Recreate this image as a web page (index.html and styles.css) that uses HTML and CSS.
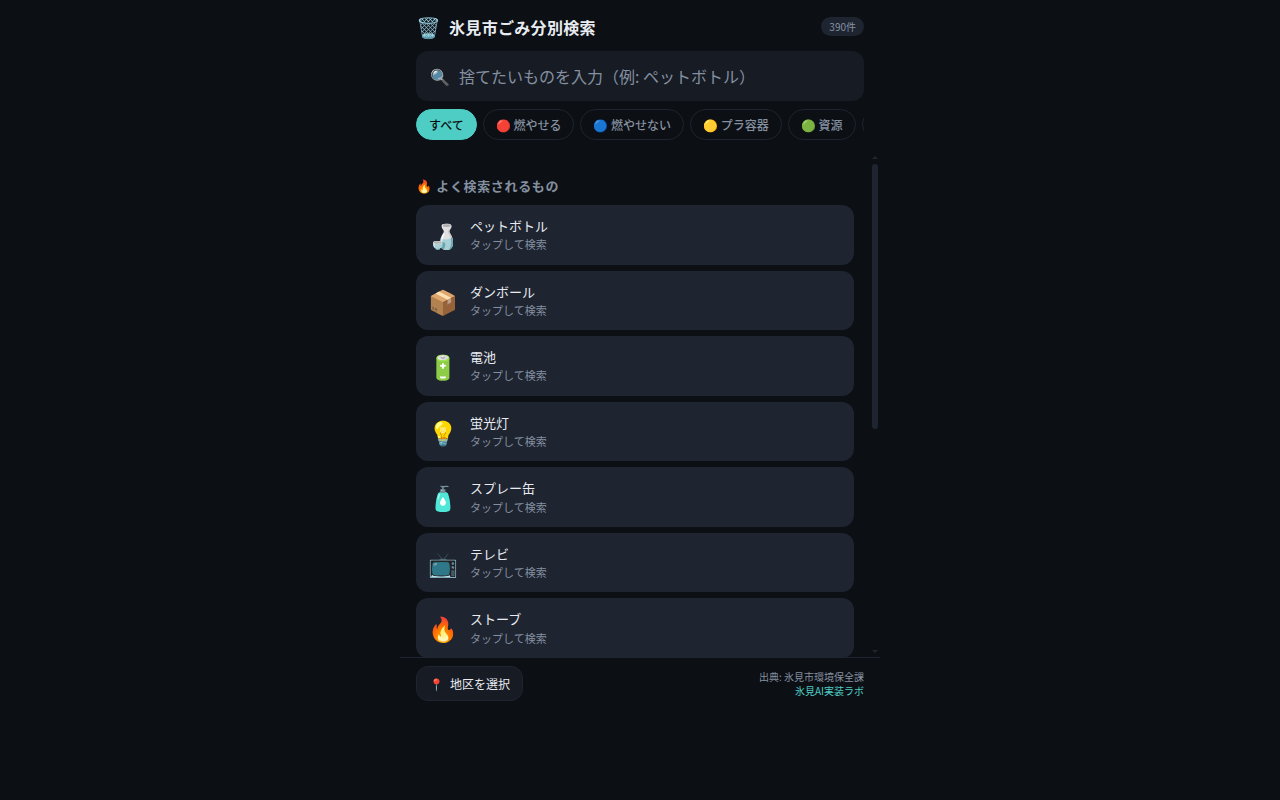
FILE: index.html
```html
<!DOCTYPE html>
<html lang="ja">
<head>
    <meta charset="UTF-8">
    <meta name="viewport" content="width=device-width, initial-scale=1.0">
    <title>氷見市ごみ分別検索</title>
    <link rel="stylesheet" href="styles.css">
</head>
<body>
    <div class="app">
        <header class="header">
            <div class="header-top">
                <span class="logo">🗑️</span>
                <h1>氷見市ごみ分別検索</h1>
                <span class="count">390件</span>
            </div>
            <label class="search-box">
                <span class="search-icon">🔍</span>
                <input type="search" class="search-input" aria-label="検索" placeholder="捨てたいものを入力（例: ペットボトル）">
            </label>
            <div class="filters">
                <button class="chip active">すべて</button>
                <button class="chip">🔴 燃やせる</button>
                <button class="chip">🔵 燃やせない</button>
                <button class="chip">🟡 プラ容器</button>
                <button class="chip">🟢 資源</button>
                <button class="chip">🟣 粗大</button>
            </div>
        </header>

        <div class="results-wrap">
            <main class="results">
                <h2 class="section-title">🔥 よく検索されるもの</h2>
                <div class="items">
                    <button class="item">
                        <span class="item-icon">🍶</span>
                        <span class="item-text"><span class="item-name">ペットボトル</span><span class="item-hint">タップして検索</span></span>
                    </button>
                    <button class="item">
                        <span class="item-icon">📦</span>
                        <span class="item-text"><span class="item-name">ダンボール</span><span class="item-hint">タップして検索</span></span>
                    </button>
                    <button class="item">
                        <span class="item-icon">🔋</span>
                        <span class="item-text"><span class="item-name">電池</span><span class="item-hint">タップして検索</span></span>
                    </button>
                    <button class="item">
                        <span class="item-icon">💡</span>
                        <span class="item-text"><span class="item-name">蛍光灯</span><span class="item-hint">タップして検索</span></span>
                    </button>
                    <button class="item">
                        <span class="item-icon">🧴</span>
                        <span class="item-text"><span class="item-name">スプレー缶</span><span class="item-hint">タップして検索</span></span>
                    </button>
                    <button class="item">
                        <span class="item-icon">📺</span>
                        <span class="item-text"><span class="item-name">テレビ</span><span class="item-hint">タップして検索</span></span>
                    </button>
                    <button class="item">
                        <span class="item-icon">🔥</span>
                        <span class="item-text"><span class="item-name">ストーブ</span><span class="item-hint">タップして検索</span></span>
                    </button>
                </div>
            </main>
            <div class="scrollbar" aria-hidden="true">
                <span class="arrow up"></span>
                <span class="thumb"></span>
                <span class="arrow down"></span>
            </div>
        </div>

        <footer class="footer">
            <button class="area-btn"><span class="pin">📍</span>地区を選択</button>
            <div class="credit">
                出典: 氷見市環境保全課<br>
                <a href="#">氷見AI実装ラボ</a>
            </div>
        </footer>
    </div>
</body>
</html>
```
FILE: styles.css
```css
:root {
    --bg: #0c0f14;
    --surface: #171b24;
    --card: #1e2430;
    --border: #1e2430;
    --text: #e8ecf1;
    --muted: #8490a0;
    --accent: #4ecdc4;
}
* {
    margin: 0;
    padding: 0;
    box-sizing: border-box;
}
body {
    font-family: "Noto Sans CJK JP", sans-serif;
    line-height: 1.4;
    background: var(--bg);
    color: var(--text);
    height: 100vh;
    padding-bottom: 91px;
}
button, input {
    font-family: inherit;
    color: inherit;
}
button {
    cursor: pointer;
}
.app {
    max-width: 480px;
    height: 100%;
    margin: 0 auto;
    display: flex;
    flex-direction: column;
}
.header {
    padding: 12px 16px;
}
.header-top {
    display: flex;
    align-items: center;
    gap: 8px;
    height: 29px;
    margin-bottom: 10px;
}
.logo {
    font-size: 20px;
}
h1 {
    font-size: 16px;
    font-weight: 700;
    line-height: 24px;
    letter-spacing: 0.02em;
    flex: 1;
}
.count {
    font-size: 10px;
    line-height: 15px;
    padding: 2px 8px;
    border-radius: 10px;
    background: var(--card);
    color: var(--muted);
}
.search-box {
    display: flex;
    align-items: center;
    gap: 9px;
    height: 50px;
    padding: 0 14px;
    background: var(--surface);
    border-radius: 12px;
}
.search-icon {
    font-size: 16px;
}
.search-input {
    flex: 1;
    min-width: 0;
    border: none;
    outline: none;
    background: none;
    font-size: 16px;
}
.search-input::placeholder {
    color: var(--muted);
}
.filters {
    display: flex;
    gap: 6px;
    margin-top: 8px;
    overflow-x: auto;
    scrollbar-width: none;
}
.chip {
    flex-shrink: 0;
    height: 31px;
    padding: 0 12px;
    border: 1px solid var(--border);
    border-radius: 16px;
    background: transparent;
    color: var(--muted);
    font-size: 12px;
    font-weight: 500;
    white-space: nowrap;
}
.chip.active {
    background: var(--accent);
    border-color: var(--accent);
    color: var(--bg);
}
.results-wrap {
    flex: 1;
    min-height: 0;
    display: flex;
}
.results {
    flex: 1;
    padding: 24px 16px 0;
    overflow-y: auto;
    scrollbar-width: none;
}
.section-title {
    font-size: 13px;
    font-weight: 700;
    letter-spacing: 0.05em;
    line-height: 19px;
    color: var(--muted);
    margin-bottom: 10px;
}
.items {
    display: flex;
    flex-direction: column;
    gap: 6px;
}
.item {
    display: flex;
    align-items: center;
    gap: 12px;
    padding: 12px;
    border: none;
    border-radius: 12px;
    background: var(--card);
    line-height: 1.4;
    text-align: left;
}
.item-icon {
    width: 30px;
    font-size: 24px;
    text-align: center;
}
.item-text {
    display: flex;
    flex-direction: column;
    gap: 2px;
}
.item-name {
    font-size: 13px;
}
.item-hint {
    font-size: 11px;
    color: var(--muted);
}

/* scrollbar */
.scrollbar {
    display: flex;
    flex-direction: column;
    width: 10px;
    padding: 4px 2px;
}
.arrow {
    height: 3px;
    background: var(--card);
}
.arrow.up {
    clip-path: polygon(50% 0, 100% 100%, 0 100%);
}
.arrow.down {
    clip-path: polygon(0 0, 100% 0, 50% 100%);
}
.thumb {
    height: 53.4%;
    margin: 5px 0 auto;
    border-radius: 3px;
    background: var(--card);
}

.footer {
    display: flex;
    align-items: center;
    justify-content: space-between;
    padding: 8px 16px;
    border-top: 1px solid var(--border);
}
.area-btn {
    display: flex;
    align-items: center;
    gap: 6px;
    height: 35px;
    padding: 0 12px;
    border: 1px solid var(--border);
    border-radius: 12px;
    background: var(--surface);
    font-size: 12px;
}
.credit {
    font-size: 10px;
    text-align: right;
    color: var(--muted);
}
.credit a {
    color: var(--accent);
    text-decoration: none;
}
```
